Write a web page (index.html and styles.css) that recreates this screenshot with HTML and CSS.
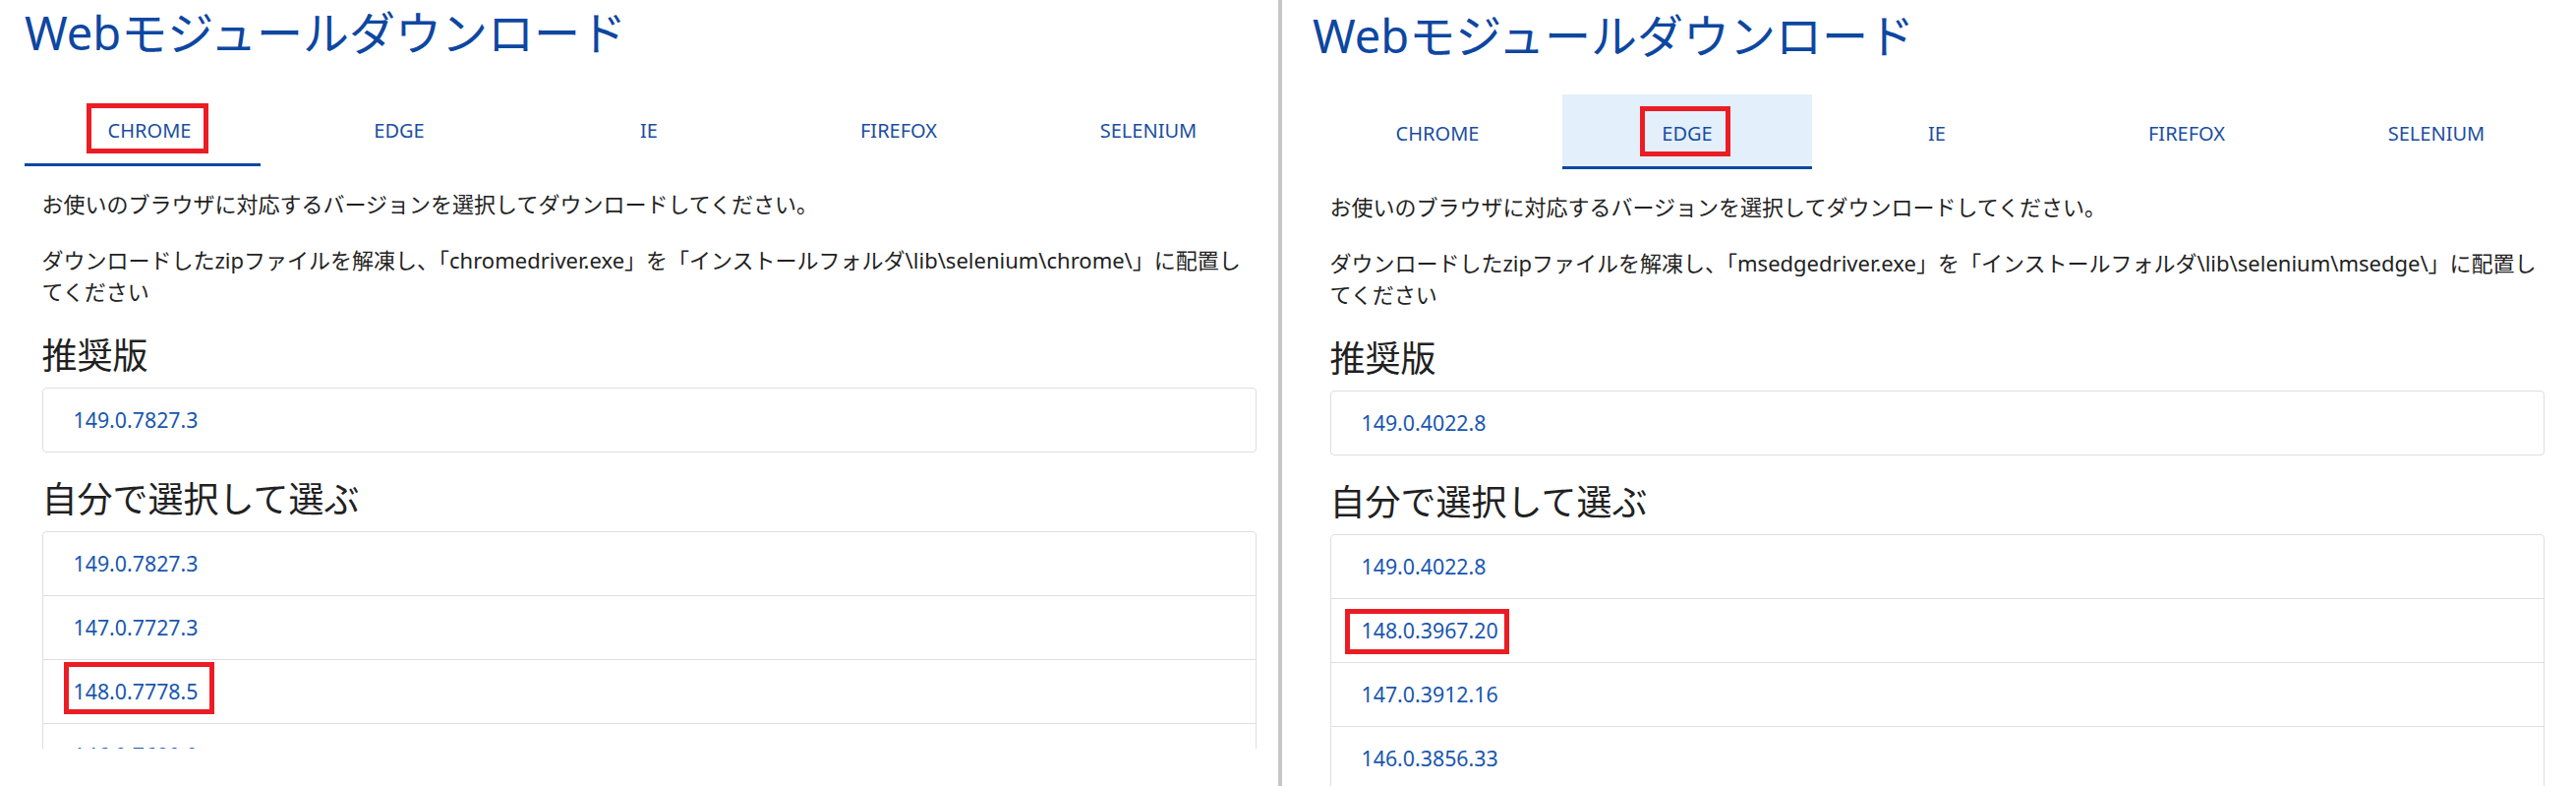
FILE: index.html
```html
<!DOCTYPE html>
<html lang="ja">
<head>
    <meta charset="UTF-8">
    <meta name="viewport" content="width=device-width, initial-scale=1.0">
    <title>Webモジュールダウンロード</title>
    <link rel="stylesheet" href="styles.css">
</head>
<body>
    <div class="screens">
        <section class="shot shot-chrome">
            <div class="page">
                <h1 class="title">Webモジュールダウンロード</h1>
                <nav class="tabs">
                    <a class="tab active"><span class="mark mark-tab">CHROME</span></a>
                    <a class="tab">EDGE</a>
                    <a class="tab">IE</a>
                    <a class="tab">FIREFOX</a>
                    <a class="tab">SELENIUM</a>
                </nav>
                <div class="tab-body">
                    <p>お使いのブラウザに対応するバージョンを選択してダウンロードしてください。</p>
                    <p class="fixed-lines">ダウンロードしたzipファイルを解凍し、「chromedriver.exe」を「インストールフォルダ\lib\selenium\chrome\」に配置し<br>てください</p>
                    <h3>推奨版</h3>
                    <div class="list-group">
                        <a class="list-item">149.0.7827.3</a>
                    </div>
                    <h3>自分で選択して選ぶ</h3>
                    <div class="list-group">
                        <a class="list-item">149.0.7827.3</a>
                        <a class="list-item">147.0.7727.3</a>
                        <a class="list-item"><span class="mark mark-tall">148.0.7778.5</span></a>
                        <a class="list-item">146.0.7680.9</a>
                    </div>
                </div>
            </div>
        </section>

        <div class="divider"></div>

        <section class="shot shot-edge">
            <div class="page">
                <h1 class="title">Webモジュールダウンロード</h1>
                <nav class="tabs">
                    <a class="tab">CHROME</a>
                    <a class="tab active focused"><span class="mark mark-tab">EDGE</span></a>
                    <a class="tab">IE</a>
                    <a class="tab">FIREFOX</a>
                    <a class="tab">SELENIUM</a>
                </nav>
                <div class="tab-body">
                    <p>お使いのブラウザに対応するバージョンを選択してダウンロードしてください。</p>
                    <p class="fixed-lines">ダウンロードしたzipファイルを解凍し、「msedgedriver.exe」を「インストールフォルダ\lib\selenium\msedge\」に配置し<br>てください</p>
                    <h3>推奨版</h3>
                    <div class="list-group">
                        <a class="list-item">149.0.4022.8</a>
                    </div>
                    <h3>自分で選択して選ぶ</h3>
                    <div class="list-group">
                        <a class="list-item">149.0.4022.8</a>
                        <a class="list-item"><span class="mark mark-short">148.0.3967.20</span></a>
                        <a class="list-item">147.0.3912.16</a>
                        <a class="list-item">146.0.3856.33</a>
                    </div>
                </div>
            </div>
        </section>
    </div>
</body>
</html>
```

FILE: styles.css
```css
html, body {
    margin: 0;
    height: 799px;
    overflow: hidden;
    background-color: #fff;
}
body {
    font-family: "Noto Sans", "Noto Sans CJK JP", sans-serif;
    color: #222;
}
.screens {
    display: flex;
    height: 799px;
}
.shot {
    box-sizing: border-box;
    overflow: hidden;
}
.shot-chrome {
    width: 1300px;
    height: 761px;
    padding-left: 25px;
}
.shot-edge {
    flex: 1;
    padding: 3px 0 0 31px;
}
.divider {
    width: 4px;
    background-color: #c6c6c6;
}
.page {
    width: 1270px;
}
.title {
    margin: 4px 0 0;
    font-size: 47px;
    font-weight: normal;
    line-height: 58px;
    color: #0d47a1;
}
.tabs {
    display: flex;
    margin-top: 31px;
}
.tab {
    position: relative;
    flex: 0 0 254px;
    padding: 24px 0 17px;
    font-size: 20px;
    line-height: 32px;
    text-align: center;
    color: #1a4ea3;
    border-bottom: 3px solid transparent;
}
.tab.active::after {
    content: "";
    position: absolute;
    left: 0;
    right: 0;
    bottom: -3px;
    height: 3px;
    background-color: #0d47a1;
}
.shot-chrome .tab.active::after {
    right: 14px;
}
.tab.focused {
    background-color: #e3f0fb;
}
.tab-body {
    padding: 0 17.5px;
}
p {
    margin: 22px 0 25px;
    font-size: 22px;
    line-height: 32px;
}
p + p {
    margin: 0 0 28px;
}
.fixed-lines {
    white-space: nowrap;
}
h3 {
    margin: 0 0 10px;
    font-size: 36px;
    font-weight: normal;
    line-height: 44px;
    color: #212121;
}
.list-group {
    display: flex;
    flex-direction: column;
    margin-bottom: 26px;
    border: 1px solid #dfdfdf;
    border-radius: 4px;
}
.list-item {
    padding: 16px 31px;
    font-size: 21.33px;
    line-height: 32px;
    color: #1857b0;
}
.list-item + .list-item {
    border-top: 1px solid #dfdfdf;
}

/* 赤枠の注釈 */
.mark {
    position: relative;
}
.mark::after {
    content: "";
    position: absolute;
    border: 5px solid #ec1c24;
}
.mark-tab::after {
    top: -14px;
    right: -18px;
    bottom: -10px;
    left: -22px;
}
.mark-tall::after {
    top: -15px;
    right: -17px;
    bottom: -9px;
    left: -10px;
}
.mark-short::after {
    top: -7px;
    right: -11px;
    bottom: -10px;
    left: -17px;
}
```
